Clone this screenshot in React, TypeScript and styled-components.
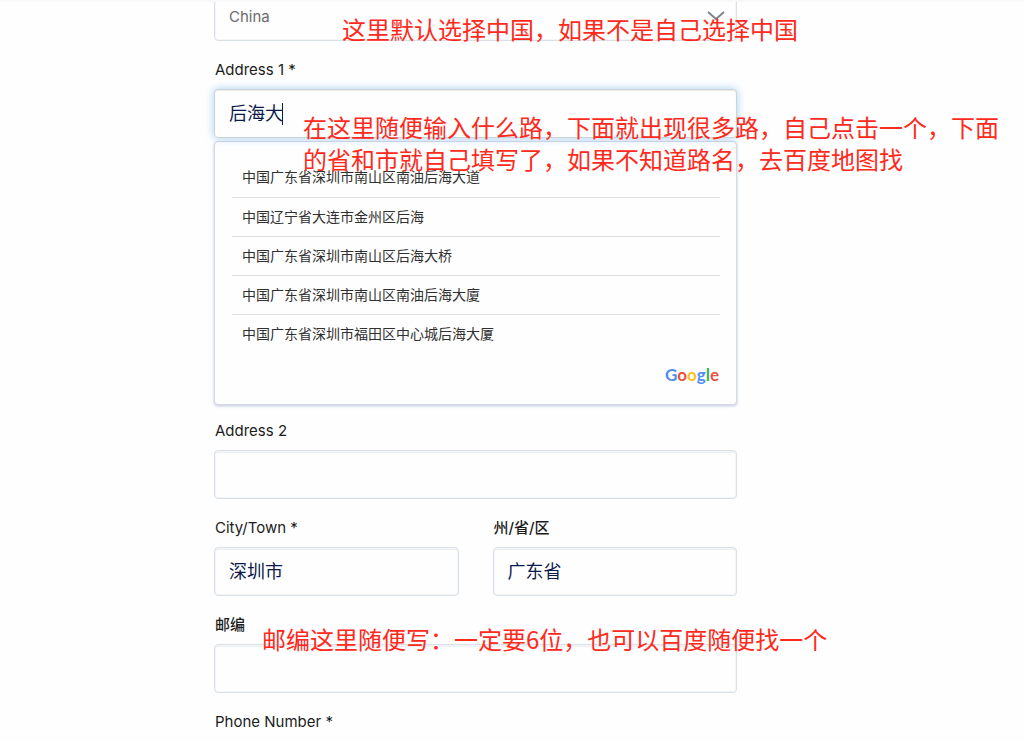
import React from "react";
import styled, { createGlobalStyle, css } from "styled-components";

const GlobalStyle = createGlobalStyle`
  *, *::before, *::after { box-sizing: border-box; }
  body {
    margin: 0;
    background: #fefefe;
    color: #1d1d1f;
    font-family: Inter, "Noto Sans CJK SC", sans-serif;
    overflow-x: hidden;
  }
`;

const Page = styled.main`
  border-top: 2px solid #f8f8f8;
`;

const Form = styled.form`
  display: flex;
  flex-direction: column;
  margin: 0 287px 0 214px;
`;

const Field = styled.div`
  position: relative;
  flex: 1;
  min-width: 0;
  padding-top: 18px;
`;

const FieldRow = styled.div`
  display: flex;
  gap: 34px;
`;

const Label = styled.label`
  display: block;
  margin-bottom: 8px;
  padding-left: 1px;
  font-size: 15px;
  line-height: 22px;
  color: #1c1c1c;
`;

const CjkLabel = styled(Label)`
  font-weight: 500;
`;

const control = css`
  display: block;
  width: 100%;
  height: 49px;
  padding: 0 14px;
  border: 1px solid #d9e0e7;
  border-radius: 4px;
  background: #fefefe;
  outline: none;
  box-shadow: inset 0 0 0 1px #f3f5f8, inset 0 2px 1px #eceef0;
`;

const Input = styled.input<{ $active?: boolean }>`
  ${control}
  padding-bottom: 3px;
  font-family: "Noto Sans CJK SC", sans-serif;
  font-size: 18px;
  color: #0b1a4b;
  ${(p) =>
    p.$active &&
    css`
      border-color: #ccd3da;
      box-shadow: 0 0 8px rgba(102, 175, 233, 0.6), inset 0 1px 1px rgba(0, 0, 0, 0.08);
    `}
`;

const InputBox = styled.div`
  position: relative;
`;

const Caret = styled.span`
  position: absolute;
  left: 68px;
  top: 14px;
  width: 1px;
  height: 22px;
  background: #0b1a4b;
`;

const CountryField = styled.div`
  position: relative;
`;

const CountryClip = styled.div`
  display: flex;
  align-items: flex-end;
  height: 39px;
  overflow: hidden;
`;

const Select = styled.select`
  ${control}
  flex-shrink: 0;
  appearance: none;
  font-family: inherit;
  font-size: 15px;
  color: #6b6b6b;
`;

const Chevron = styled.svg`
  position: absolute;
  right: 12px;
  top: 8px;
  width: 18px;
  height: 12px;
  fill: none;
  stroke: #7d848b;
  stroke-width: 2;
  pointer-events: none;
`;

const Suggestions = styled.div`
  margin: 3px 0 -3px;
  padding: 16px 16px 17px 17px;
  border: 1px solid #d3d9e8;
  border-radius: 4px;
  background: #fefefe;
  box-shadow: 0 1px 3px rgba(80, 95, 150, 0.35);
`;

const SuggestionList = styled.ul`
  margin: 0;
  padding: 0;
  list-style: none;
`;

const Suggestion = styled.li`
  height: 39px;
  padding: 0 10px;
  border-bottom: 1px solid #dedede;
  font-size: 14px;
  line-height: 38px;
  color: #303030;
  white-space: nowrap;
  overflow: hidden;

  &:first-child { height: 40px; }
  &:last-child { border-bottom-color: transparent; }
`;

const Logo = styled.div`
  margin-top: 9px;
  padding-right: 1px;
  font-family: Lato, sans-serif;
  font-size: 17px;
  font-weight: 700;
  line-height: 24px;
  text-align: right;
`;

const Letter = styled.span<{ $color: string }>`
  color: ${(p) => p.$color};
`;

const Note = styled.p<{ $left: number; $top: number }>`
  position: absolute;
  z-index: 1;
  left: ${(p) => p.$left}px;
  top: ${(p) => p.$top}px;
  margin: 0;
  font-family: "Noto Sans CJK SC", sans-serif;
  font-size: 24px;
  line-height: 32px;
  color: #ff2a1c;
  white-space: nowrap;
  pointer-events: none;
`;

const addresses = [
  "中国广东省深圳市南山区南油后海大道",
  "中国辽宁省大连市金州区后海",
  "中国广东省深圳市南山区后海大桥",
  "中国广东省深圳市南山区南油后海大廈",
  "中国广东省深圳市福田区中心城后海大厦",
];

const logoLetters: [string, string][] = [
  ["G", "#4f8df5"],
  ["o", "#ea5143"],
  ["o", "#fbc021"],
  ["g", "#4f8df5"],
  ["l", "#3fae5c"],
  ["e", "#ea5143"],
];

export default function App() {
  return (
    <>
      <GlobalStyle />
      <Page>
        <Form>
          <CountryField>
            <CountryClip>
              <Select aria-label="Country" defaultValue="China">
                <option>China</option>
              </Select>
            </CountryClip>
            <Chevron viewBox="0 0 18 12" aria-hidden="true">
              <path d="M1 2 L9 9 L17 2" />
            </Chevron>
            <Note $left={128} $top={11}>
              这里默认选择中国，如果不是自己选择中国
            </Note>
          </CountryField>

          <Field>
            <Label htmlFor="address1">Address 1 *</Label>
            <InputBox>
              <Input id="address1" $active defaultValue="后海大" />
              <Caret />
            </InputBox>
            <Suggestions>
              <SuggestionList>
                {addresses.map((a) => (
                  <Suggestion key={a}>{a}</Suggestion>
                ))}
              </SuggestionList>
              <Logo>
                {logoLetters.map(([ch, color], i) => (
                  <Letter key={i} $color={color}>
                    {ch}
                  </Letter>
                ))}
              </Logo>
            </Suggestions>
            <Note $left={89} $top={70}>
              在这里随便输入什么路，下面就出现很多路，自己点击一个，下面
              <br />
              的省和市就自己填写了，如果不知道路名，去百度地图找
            </Note>
          </Field>

          <Field>
            <Label htmlFor="address2">Address 2</Label>
            <Input id="address2" />
          </Field>

          <FieldRow>
            <Field>
              <Label htmlFor="city">City/Town *</Label>
              <Input id="city" defaultValue="深圳市" />
            </Field>
            <Field>
              <CjkLabel htmlFor="region">州/省/区</CjkLabel>
              <Input id="region" defaultValue="广东省" />
            </Field>
          </FieldRow>

          <Field>
            <CjkLabel htmlFor="postcode">邮编</CjkLabel>
            <Input id="postcode" />
            <Note $left={48} $top={27}>
              邮编这里随便写：一定要6位，也可以百度随便找一个
            </Note>
          </Field>

          <Field>
            <Label as="div">Phone Number *</Label>
          </Field>
        </Form>
      </Page>
    </>
  );
}
